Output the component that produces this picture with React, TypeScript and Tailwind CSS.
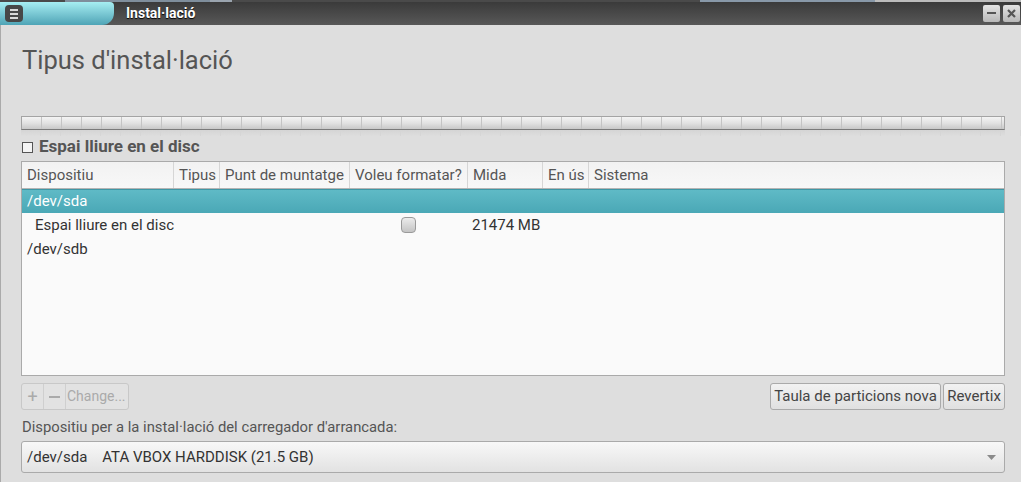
import React from "react";

const columns = [
  { label: "Dispositiu", width: "w-[152px]" },
  { label: "Tipus", width: "w-[46px]" },
  { label: "Punt de muntatge", width: "w-[130px]" },
  { label: "Voleu formatar?", width: "w-[118px]" },
  { label: "Mida", width: "w-[75px]" },
  { label: "En ús", width: "w-[46px]" },
  { label: "Sistema", width: "flex-1" },
];

const segments = Array.from({ length: 50 });

const App = () => {
  return (
    <div className="w-[1021px] h-[482px] overflow-hidden bg-[#dedede] font-['Roboto',sans-serif] flex flex-col">
      {/* Title bar */}
      <div className="h-[25px] shrink-0 flex flex-col bg-gradient-to-b from-[#383838] to-[#585858]">
        <div className="h-[2px] flex">
          <div className="w-[65px] bg-[#4a4a4a]" />
          <div className="w-[145px] bg-[#7f8e9c]" />
          <div className="w-[22px] bg-[#9aa4ae]" />
          <div className="w-[468px] bg-[#4a4a4a]" />
          <div className="w-[175px] bg-[#8898a8]" />
          <div className="flex-1 bg-[#bcbcbc]" />
        </div>
        <div className="flex-1 flex items-center">
          <div className="w-[114px] h-full flex items-center pl-[5px] rounded-br-[12px] rounded-tr-[4px] bg-gradient-to-b from-[#a6eef2] to-[#4ea4b6]">
            <div className="w-[18px] h-[17px] rounded-[4px] bg-[#474747] flex flex-col items-center justify-center gap-[2px]">
              <div className="w-[8px] h-[2px] bg-[#d8d8d8]" />
              <div className="w-[8px] h-[2px] bg-[#d8d8d8]" />
              <div className="w-[8px] h-[2px] bg-[#d8d8d8]" />
            </div>
          </div>
          <div className="ml-[12px] text-white font-bold text-[14px] [text-shadow:0_1px_1px_#000]">
            Instal·lació
          </div>
          <div className="ml-auto flex gap-[3px] pr-[1px] pb-[1px]">
            <div className="w-[17px] h-[17px] rounded-[2px] bg-gradient-to-b from-[#e4e4e4] to-[#b8b8b8] flex items-center justify-center">
              <div className="w-[9px] h-[2px] bg-[#555]" />
            </div>
            <div className="w-[17px] h-[17px] rounded-[2px] bg-gradient-to-b from-[#e4e4e4] to-[#b8b8b8] flex items-center justify-center">
              <svg width="9" height="9" viewBox="0 0 9 9">
                <path d="M1 1 8 8M8 1 1 8" stroke="#555" strokeWidth="2.2" />
              </svg>
            </div>
          </div>
        </div>
      </div>

      {/* Content */}
      <div className="flex-1 flex flex-col border-l border-[#aaa] pl-[20px] pr-[16px] text-[#444] text-[15px]">
        <h1 className="pt-[20px] text-[25.5px] leading-[30px] text-[#555] pl-[1px]">
          Tipus d'instal·lació
        </h1>

        {/* Partition bar */}
        <div className="mt-[41px] h-[14px] border border-[#a4a4a4] border-b-[#7a7a7a] flex overflow-hidden bg-gradient-to-b from-[#f4f4f4] via-[#e2e2e2] to-[#c8c8c8]">
          {segments.map((_, i) => (
            <div key={i} className="w-[20px] shrink-0 border-r border-[#c4c4c4]" />
          ))}
        </div>
        <div className="h-[6px] flex opacity-60 bg-gradient-to-b from-[#cfcfcf] to-[#dedede]">
          {segments.map((_, i) => (
            <div key={i} className="w-[20px] shrink-0 border-r border-[#d2d2d2]" />
          ))}
        </div>

        <div className="mt-[1px] flex items-center h-[20px]">
          <div className="w-[11px] h-[11px] ml-[1px] border border-[#555] bg-[#f4f4f4]" />
          <span className="ml-[6px] text-[17px] font-bold text-[#555]">Espai lliure en el disc</span>
        </div>

        {/* Table */}
        <div className="mt-[4px] h-[215px] border border-[#aaa] bg-[#fafafa] flex flex-col">
          <div className="h-[27px] flex border-b border-[#b4b4b4] bg-gradient-to-b from-[#f2f2f2] to-[#f8f8f8] text-[#555]">
            {columns.map((c, i) => (
              <div
                key={c.label}
                className={`${c.width} flex items-center pl-[5px] whitespace-nowrap ${i < columns.length - 1 ? "border-r border-[#d6d6d6]" : ""}`}
              >
                {c.label}
              </div>
            ))}
          </div>
          <div className="h-[24px] flex items-center pl-[5px] text-white bg-gradient-to-b from-[#5fbac6] to-[#4aa8b6] border-t border-[#3f98a6]">
            /dev/sda
          </div>
          <div className="h-[24px] flex items-center text-[#333]">
            <div className="w-[327px] pl-[13px]">Espai lliure en el disc</div>
            <div className="w-[118px] flex justify-center">
              <div className="w-[15px] h-[16px] rounded-[4px] border border-[#9a9a9a] bg-gradient-to-b from-[#ececec] to-[#c4c4c4]" />
            </div>
            <div className="pl-[5px]">21474 MB</div>
          </div>
          <div className="h-[24px] flex items-center pl-[5px] text-[#333]">/dev/sdb</div>
        </div>

        {/* Buttons */}
        <div className="mt-[7px] flex items-center">
          <div className="h-[27px] flex border border-[#c8c8c8] rounded-[3px] bg-[#e2e2e2] text-[#aaa]">
            <div className="w-[22px] flex items-center justify-center border-r border-[#cfcfcf] text-[18px]">+</div>
            <div className="w-[22px] flex items-center justify-center border-r border-[#cfcfcf]">
              <div className="w-[11px] h-[2px] bg-[#aaa]" />
            </div>
            <div className="pl-[1px] pr-[2px] flex items-center text-[14px]">Change...</div>
          </div>
          <div className="ml-auto flex gap-[2px]">
            <div className="h-[27px] w-[171px] flex items-center justify-center border border-[#aaa] rounded-[3px] bg-gradient-to-b from-[#f2f2f2] to-[#e0e0e0] text-[#444]">
              Taula de particions nova
            </div>
            <div className="h-[27px] w-[62px] flex items-center justify-center border border-[#aaa] rounded-[3px] bg-gradient-to-b from-[#f2f2f2] to-[#e0e0e0] text-[#444]">
              Revertix
            </div>
          </div>
        </div>

        <div className="mt-[8px] pl-[1px] text-[#555] text-[14.8px] leading-[18px]">
          Dispositiu per a la instal·lació del carregador d'arrancada:
        </div>

        <div className="mt-[5px] h-[32px] flex items-center border border-[#aaa] rounded-[3px] bg-gradient-to-b from-[#f8f8f8] to-[#e2e2e2] pl-[5px] pr-[8px] text-[#333]">
          <span className="whitespace-pre">/dev/sda    ATA VBOX HARDDISK (21.5 GB)</span>
          <svg className="ml-auto" width="9" height="5" viewBox="0 0 9 5">
            <path d="M0 0h9L4.5 5z" fill="#8a8a8a" />
          </svg>
        </div>
      </div>
    </div>
  );
};

export default App;
